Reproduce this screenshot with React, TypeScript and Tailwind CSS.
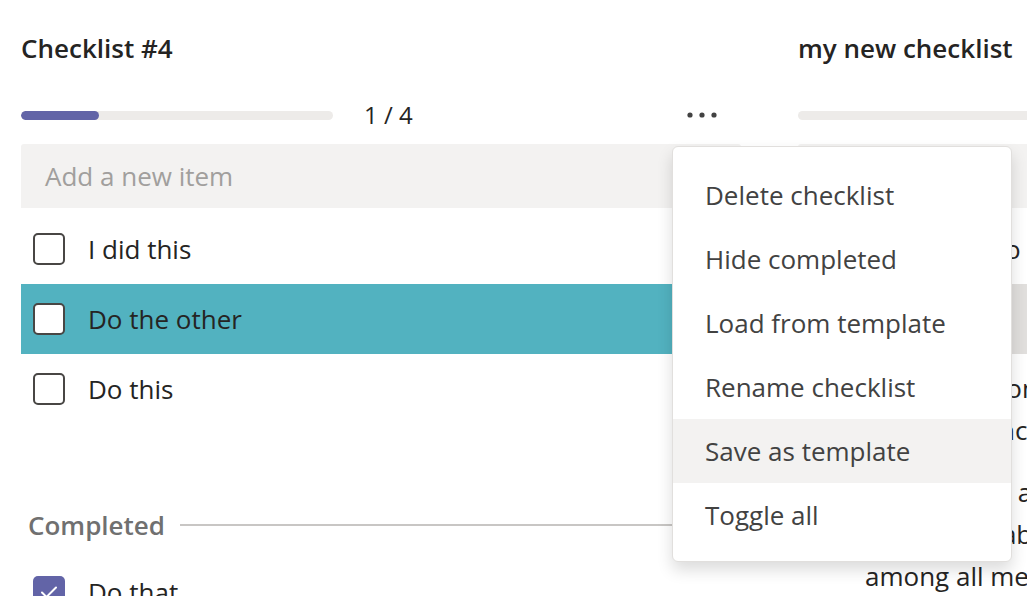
import React from "react";

const Box = ({ checked, white }: { checked?: boolean; white?: boolean }) => {
  if (checked) {
    return (
      <div className="w-[32px] h-[32px] shrink-0 rounded-[5px] bg-[#6264a7] flex items-center justify-center">
        <svg width="18" height="14" viewBox="0 0 18 14" fill="none">
          <path d="M2 7.5l4.5 4.5L16 2.5" stroke="white" strokeWidth="2" strokeLinecap="round" strokeLinejoin="round" />
        </svg>
      </div>
    );
  }
  return (
    <div
      className={`w-[32px] h-[32px] shrink-0 rounded-[5px] border-2 border-[#484644] ${white ? "bg-white" : ""}`}
    />
  );
};

const Row = ({ text, className = "", white }: { text: React.ReactNode; className?: string; white?: boolean }) => (
  <div className={`flex items-center min-h-[70px] pl-[12px] ${className}`}>
    <Box white={white} />
    <span className="ml-[23px] text-[26px] leading-[42px] whitespace-nowrap">{text}</span>
  </div>
);

const Header = ({ title, done, total, dots }: { title: string; done: string; total: number; dots?: boolean }) => (
  <>
    <h2 className="text-[26px] font-semibold leading-[32px] whitespace-nowrap">{title}</h2>
    <div className="flex items-center mt-[35px] h-[32px]">
      <div className="w-[312px] h-[9px] rounded-full bg-[#edebe9] overflow-hidden shrink-0">
        <div className="h-full rounded-full bg-[#6264a7]" style={{ width: `${total}%` }} />
      </div>
      {done && <span className="ml-[31px] text-[24px] leading-[32px] whitespace-nowrap">{done}</span>}
      <div className="flex-1" />
      {dots && (
        <svg width="30" height="8" viewBox="0 0 30 8" className="mr-[24px]">
          <circle cx="3" cy="4" r="2.6" fill="#424242" />
          <circle cx="15" cy="4" r="2.6" fill="#424242" />
          <circle cx="27" cy="4" r="2.6" fill="#424242" />
        </svg>
      )}
    </div>
    <div className="mt-[13px] h-[64px] bg-[#f3f2f1] rounded-t-[3px] flex items-center pl-[24px] text-[26px] text-[#a19f9d] whitespace-nowrap">
      Add a new item
    </div>
  </>
);

const menu = [
  "Delete checklist",
  "Hide completed",
  "Load from template",
  "Rename checklist",
  "Save as template",
  "Toggle all",
];

export default function App() {
  return (
    <div className="relative w-[1027px] h-[596px] overflow-hidden bg-white text-[#252423] font-['Open_Sans',sans-serif]">
      <div className="flex pt-[32px]">
        {/* left checklist */}
        <div className="ml-[21px] w-[720px] shrink-0">
          <Header title="Checklist #4" done="1 / 4" total={25} dots />
          <div className="mt-[6px]">
            <Row text="I did this" />
            <Row text="Do the other" className="bg-[#52b2c0]" white />
            <Row text="Do this" />
          </div>
          <div className="flex items-center mt-[85px] h-[32px] pl-[7px]">
            <span className="text-[26px] font-semibold text-[#707070]">Completed</span>
            <div className="flex-1 ml-[15px] h-[2px] bg-[#c8c6c4]" />
          </div>
          <div className="flex items-center h-[70px] pl-[12px] mt-[16px]">
            <Box checked />
            <span className="ml-[23px] text-[26px]">Do that</span>
          </div>
        </div>

        {/* right checklist */}
        <div className="ml-[57px] w-[420px] shrink-0">
          <Header title="my new checklist" done="" total={0} />
          <div className="mt-[6px]">
            <Row text="Chores to do today" />
            <Row text="Call back" className="bg-[#e1dfdd]" />
            <Row
              className="py-[13px]"
              text={
                <>
                  Book the room
                  <br />
                  plan our sync
                </>
              }
            />
            <Row
              className="py-[7px]"
              text={
                <>
                  Shares their agenda
                  <br />
                  notes and tables
                  <br />
                  among all members
                </>
              }
            />
          </div>
        </div>
      </div>

      {/* overflow menu */}
      <div className="absolute left-[672px] top-[146px] w-[340px] bg-white border border-[#e1dfdd] rounded-[6px] shadow-[0_8px_16px_rgba(0,0,0,0.14)] pt-[16px] pb-[14px]">
        {menu.map((m) => (
          <div
            key={m}
            className={`h-[64px] flex items-center pl-[32px] text-[26px] text-[#424242] whitespace-nowrap ${
              m === "Save as template" ? "bg-[#f3f2f1]" : ""
            }`}
          >
            {m}
          </div>
        ))}
      </div>
    </div>
  );
}
